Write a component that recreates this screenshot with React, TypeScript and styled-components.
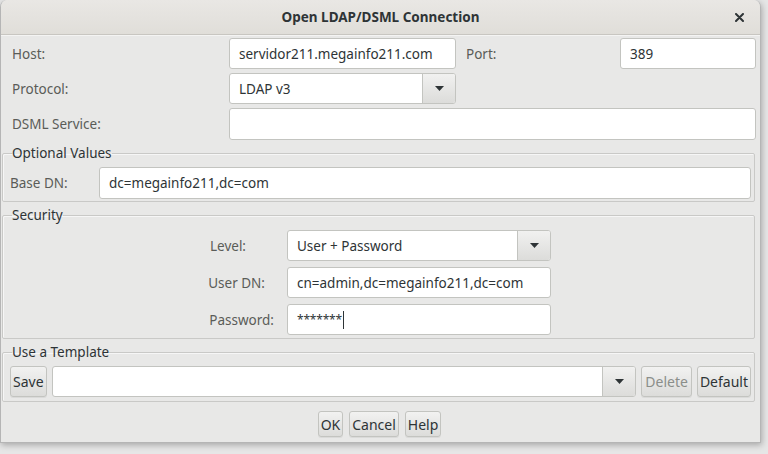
import React from "react";
import styled, { createGlobalStyle } from "styled-components";

const Global = createGlobalStyle`
  html, body { margin: 0; padding: 0; background: #e6e6e6; }
  body {
    font-family: "Noto Sans", "Open Sans", "DejaVu Sans", sans-serif;
    width: 768px; height: 454px; overflow: hidden;
    -webkit-font-smoothing: antialiased;
  }
`;

const Dialog = styled.div`
  width: 761px;
  height: 443px;
  box-sizing: border-box;
  background: #e8e8e7;
  border: 1px solid #b5b5b5;
  border-top: none;
  border-radius: 7px 7px 0 0;
  box-shadow: 1px 2px 6px rgba(0, 0, 0, 0.28);
  display: flex;
  flex-direction: column;
  overflow: hidden;
`;

const TitleBar = styled.div`
  height: 35px;
  box-sizing: border-box;
  flex: none;
  display: grid;
  grid-template-columns: 40px 1fr 40px;
  align-items: center;
  background: linear-gradient(#e9e7e4, #e0ded9);
  border-bottom: 1px solid #c8c6c1;
  box-shadow: 0 1px 0 #f4f4f3;
`;

const Title = styled.div`
  grid-column: 2;
  text-align: center;
  font-weight: 700;
  font-size: 13.5px;
  color: #2e3436;
`;

const Close = styled.div`
  grid-column: 3;
  display: flex;
  justify-content: center;
  align-items: center;
  padding-right: 1px;
  color: #2e3436;
`;

const Content = styled.div`
  flex: 1;
  display: flex;
  flex-direction: column;
  padding: 3px 5px 0 1px;
`;

const TopGrid = styled.div`
  margin-left: 10px;
  display: grid;
  grid-template-columns: 217px 227px 164px 136px;
  grid-template-rows: 31px 31px 32px;
  row-gap: 4px;
`;

const Label = styled.div<{ $pad?: number; $align?: string }>`
  display: flex;
  align-items: center;
  justify-content: ${(p) => p.$align || "flex-start"};
  padding-left: ${(p) => (p.$align ? 0 : p.$pad || 0)}px;
  padding-right: ${(p) => (p.$align ? p.$pad || 0 : 0)}px;
  font-size: 13.5px;
  color: #5a5c58;
  white-space: nowrap;
`;

const Field = styled.div<{ $span?: string }>`
  grid-column: ${(p) => p.$span || "auto"};
  box-sizing: border-box;
  height: 100%;
  min-width: 0;
  display: flex;
  align-items: center;
  padding: 0 9px;
  background: #ffffff;
  border: 1px solid #c3c4c0;
  border-radius: 3px;
  font-size: 13.5px;
  color: #2e3436;
  white-space: nowrap;
  overflow: hidden;
`;

const Combo = styled.div<{ $grow?: boolean }>`
  box-sizing: border-box;
  height: 100%;
  flex: ${(p) => (p.$grow ? "1" : "none")};
  display: flex;
  background: #ffffff;
  border: 1px solid #c3c4c0;
  border-radius: 3px;
  overflow: hidden;
`;

const ComboText = styled.div`
  flex: 1;
  display: flex;
  align-items: center;
  padding: 0 9px;
  font-size: 13.5px;
  color: #2e3436;
`;

const ComboButton = styled.div`
  width: 32px;
  flex: none;
  display: flex;
  align-items: center;
  justify-content: center;
  background: linear-gradient(#f1f1f0, #dcdcda);
  border-left: 1px solid #c3c4c0;
`;

const Group = styled.fieldset<{ $pad: string }>`
  margin: 4px 0 0 0;
  padding: ${(p) => p.$pad};
  border: 1px solid #c9c9c7;
  border-radius: 2px;
  box-shadow: inset 1px 1px 0 #f6f6f6;
  min-width: 0;
`;

const Legend = styled.legend`
  padding: 0;
  margin-left: 2px;
  font-size: 13.5px;
  line-height: 19px;
  color: #2e3436;
`;

const BaseRow = styled.div`
  display: grid;
  grid-template-columns: 89px 1fr;
  height: 32px;
`;

const SecurityGrid = styled.div`
  display: grid;
  grid-template-columns: 277px 264px;
  grid-template-rows: 31px 31px 31px;
  row-gap: 6px;
`;

const TemplateRow = styled.div`
  display: flex;
  height: 31px;
  gap: 5px;
`;

const Button = styled.div<{ $disabled?: boolean }>`
  box-sizing: border-box;
  height: 100%;
  display: flex;
  align-items: center;
  justify-content: center;
  padding: 0 ${(p) => (p.$disabled ? 3 : 2)}px;
  background: linear-gradient(#f2f2f1, #dcdcda);
  border: 1px solid #c3c4c0;
  border-radius: 3px;
  box-shadow: 0 1px 0 rgba(0, 0, 0, 0.06);
  font-size: 14px;
  color: ${(p) => (p.$disabled ? "#8b8e8a" : "#2e3436")};
  white-space: nowrap;
`;

const ButtonBar = styled.div`
  margin-top: 9px;
  height: 26px;
  display: flex;
  justify-content: center;
  gap: 6px;
  padding-left: 2px;
`;

const Secret = styled.span`
  font-size: 12px;
  letter-spacing: -0.2px;
  color: #2e3436;
`;

const Caret = styled.span`
  display: inline-block;
  width: 1px;
  height: 18px;
  background: #2e3436;
  margin-left: 1px;
`;

const Arrow = () => (
  <svg width="9" height="5" viewBox="0 0 9 5">
    <path d="M0 0 H9 L4.5 5 Z" fill="#2e3436" />
  </svg>
);

const Select = ({ value, grow }: { value: string; grow?: boolean }) => (
  <Combo $grow={grow}>
    <ComboText>{value}</ComboText>
    <ComboButton>
      <Arrow />
    </ComboButton>
  </Combo>
);

export default function App() {
  return (
    <>
      <Global />
      <Dialog>
        <TitleBar>
          <Title>Open LDAP/DSML Connection</Title>
          <Close>
            <svg width="9" height="9" viewBox="0 0 9 9">
              <path d="M1 1 L8 8 M8 1 L1 8" stroke="#2e3436" strokeWidth="2" strokeLinecap="round" />
            </svg>
          </Close>
        </TitleBar>
        <Content>
          <TopGrid>
            <Label>Host:</Label>
            <Field>servidor211.megainfo211.com</Field>
            <Label $pad={10}>Port:</Label>
            <Field>389</Field>
            <Label>Protocol:</Label>
            <Select value="LDAP v3" />
            <div />
            <div />
            <Label>DSML Service:</Label>
            <Field $span="2 / 5" />
          </TopGrid>

          <Group $pad="4px 3px 2px 7px">
            <Legend>Optional Values</Legend>
            <BaseRow>
              <Label>Base DN:</Label>
              <Field>dc=megainfo211,dc=com</Field>
            </BaseRow>
          </Group>

          <Group $pad="5px 3px 3px 7px">
            <Legend>Security</Legend>
            <SecurityGrid>
              <Label $align="flex-end" $pad={41}>Level:</Label>
              <Select value="User + Password" />
              <Label $align="flex-end" $pad={22}>User DN:</Label>
              <Field>cn=admin,dc=megainfo211,dc=com</Field>
              <Label $align="flex-end" $pad={13}>Password:</Label>
              <Field>
                <Secret>*******</Secret>
                <Caret />
              </Field>
            </SecurityGrid>
          </Group>

          <Group $pad="4px 3px 4px 7px">
            <Legend>Use a Template</Legend>
            <TemplateRow>
              <Button>Save</Button>
              <Select value="" grow />
              <Button $disabled>Delete</Button>
              <Button>Default</Button>
            </TemplateRow>
          </Group>

          <ButtonBar>
            <Button>OK</Button>
            <Button>Cancel</Button>
            <Button>Help</Button>
          </ButtonBar>
        </Content>
      </Dialog>
    </>
  );
}
